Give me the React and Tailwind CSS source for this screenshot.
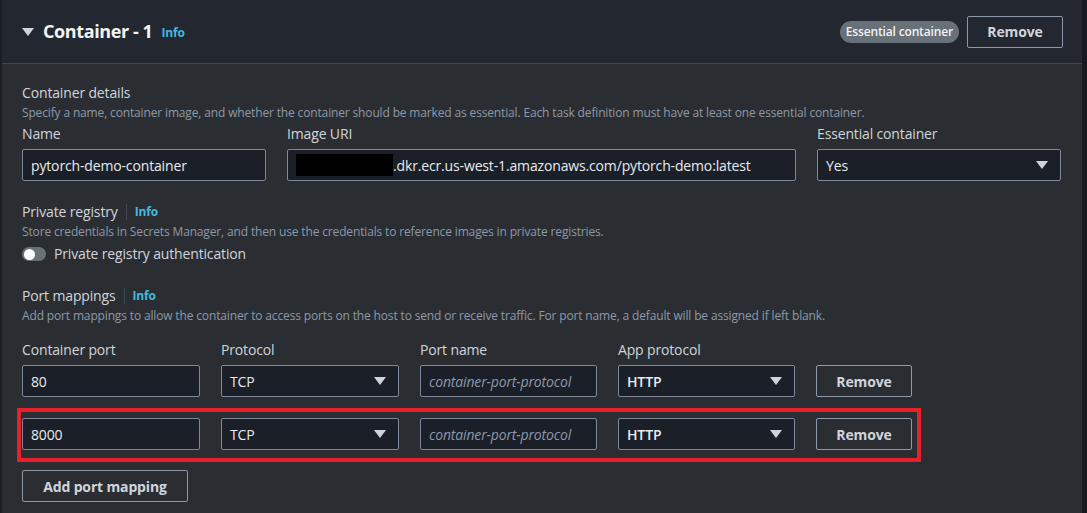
import React from "react";

const Caret = () => (
  <svg width="12" height="8" viewBox="0 0 12 8" className="shrink-0">
    <polygon points="0,0 12,0 6,8" fill="#d1d5db" />
  </svg>
);

const Input = ({ w, children, placeholder }) => (
  <div
    className={`${w} h-[32px] shrink-0 border border-[#7d8998] rounded-[2px] bg-[#1a1f28] flex items-center px-[8px] text-[14px] ${placeholder ? "italic text-[#8d99a8]" : "text-[#e9ebed]"}`}
  >
    {children}
  </div>
);

const Select = ({ w, value, bold }) => (
  <div className={`${w} h-[32px] shrink-0 border border-[#7d8998] rounded-[2px] bg-[#1a1f28] flex items-center justify-between pl-[8px] pr-[12px] text-[14px] text-[#e9ebed]`}>
    <span className={bold ? "font-semibold" : ""}>{value}</span>
    <Caret />
  </div>
);

const Btn = ({ w, children }) => (
  <div className={`${w} h-[32px] shrink-0 border border-[#8d99a8] rounded-[2px] flex items-center justify-center text-[14px] font-bold text-[#d1d5db]`}>
    {children}
  </div>
);

const Label = ({ w, children }) => (
  <div className={`${w} shrink-0 text-[14px] leading-[20px] text-[#d1d5db]`}>{children}</div>
);

const SectionHead = ({ title, desc, info }) => (
  <div>
    <div className="flex items-center text-[14px] leading-[20px] text-[#d1d5db]">
      <span>{title}</span>
      {info && (
        <>
          <span className="mx-[8px] h-[16px] w-px bg-[#414750]" />
          <span className="text-[12px] font-bold text-[#44b9e0]">Info</span>
        </>
      )}
    </div>
    <div className="text-[12px] leading-[16px] text-[#8d99a8] mt-[2px]">{desc}</div>
  </div>
);

const PortRow = ({ port }) => (
  <div className="flex gap-[21px] items-center">
    <Input w="w-[178px]">{port}</Input>
    <Select w="w-[178px]" value="TCP" />
    <Input w="w-[177px]" placeholder>container-port-protocol</Input>
    <Select w="w-[177px]" value="HTTP" bold />
    <Btn w="w-[96px]">Remove</Btn>
  </div>
);

export default function App() {
  return (
    <div
      className="w-[1087px] h-[513px] overflow-hidden bg-[#161a20] flex tracking-[-0.15px]"
      style={{ fontFamily: '"Open Sans", "Noto Sans", sans-serif' }}
    >
      <div className="w-[2px] bg-[#1b1e24]" />
      <div className="w-[1080px] flex flex-col bg-[#2a2e33]">
        {/* Header */}
        <div className="h-[64px] bg-[#232730] border-b border-[#414750] flex items-center pl-[20px] pr-[19px] shrink-0">
          <Caret />
          <span className="ml-[9px] text-[18px] font-bold text-[#f2f3f3] tracking-[-0.4px]">Container - 1</span>
          <span className="ml-[9px] mt-[3px] text-[12px] font-bold text-[#44b9e0]">Info</span>
          <div className="flex-1" />
          <span className="h-[22px] px-[6px] rounded-full bg-[#687078] text-[12px] font-semibold text-[#f2f3f3] flex items-center">
            Essential container
          </span>
          <div className="ml-[8px] w-[96px] h-[32px] border border-[#8d99a8] rounded-[2px] flex items-center justify-center text-[14px] font-bold text-[#d1d5db]">
            Remove
          </div>
        </div>

        {/* Body */}
        <div className="pl-[20px] pt-[19px] flex flex-col">
          <SectionHead
            title="Container details"
            desc="Specify a name, container image, and whether the container should be marked as essential. Each task definition must have at least one essential container."
          />
          <div className="flex gap-[21px] mt-[3px]">
            <Label w="w-[244px]">Name</Label>
            <Label w="w-[509px]">Image URI</Label>
            <Label w="w-[244px]">Essential container</Label>
          </div>
          <div className="flex gap-[21px] mt-[5px]">
            <Input w="w-[244px]">pytorch-demo-container</Input>
            <Input w="w-[509px]">
              <span className="w-[97px] h-[22px] bg-black shrink-0" />
              <span>.dkr.ecr.us-west-1.amazonaws.com/pytorch-demo:latest</span>
            </Input>
            <Select w="w-[244px]" value="Yes" />
          </div>

          <div className="mt-[21px]">
            <SectionHead
              title="Private registry"
              info
              desc="Store credentials in Secrets Manager, and then use the credentials to reference images in private registries."
            />
          </div>
          <div className="flex items-center mt-[4px]">
            <div className="w-[24px] h-[14px] rounded-full bg-[#687078] flex items-center pl-[2px]">
              <div className="w-[11px] h-[11px] rounded-full bg-white" />
            </div>
            <span className="ml-[8px] text-[14px] leading-[20px] text-[#d1d5db]">Private registry authentication</span>
          </div>

          <div className="mt-[22px]">
            <SectionHead
              title="Port mappings"
              info
              desc="Add port mappings to allow the container to access ports on the host to send or receive traffic. For port name, a default will be assigned if left blank."
            />
          </div>
          <div className="flex gap-[21px] mt-[16px]">
            <Label w="w-[178px]">Container port</Label>
            <Label w="w-[178px]">Protocol</Label>
            <Label w="w-[177px]">Port name</Label>
            <Label w="w-[177px]">App protocol</Label>
          </div>
          <div className="mt-[5px]">
            <PortRow port="80" />
          </div>
          <div className="mt-[11px] -ml-[5px] w-[904px] border-4 border-[#e8202a] pt-[6px] pb-[8px] pl-[1px]">
            <PortRow port="8000" />
          </div>
          <div className="mt-[8px]">
            <Btn w="w-[166px]">Add port mapping</Btn>
          </div>
        </div>
      </div>
    </div>
  );
}
